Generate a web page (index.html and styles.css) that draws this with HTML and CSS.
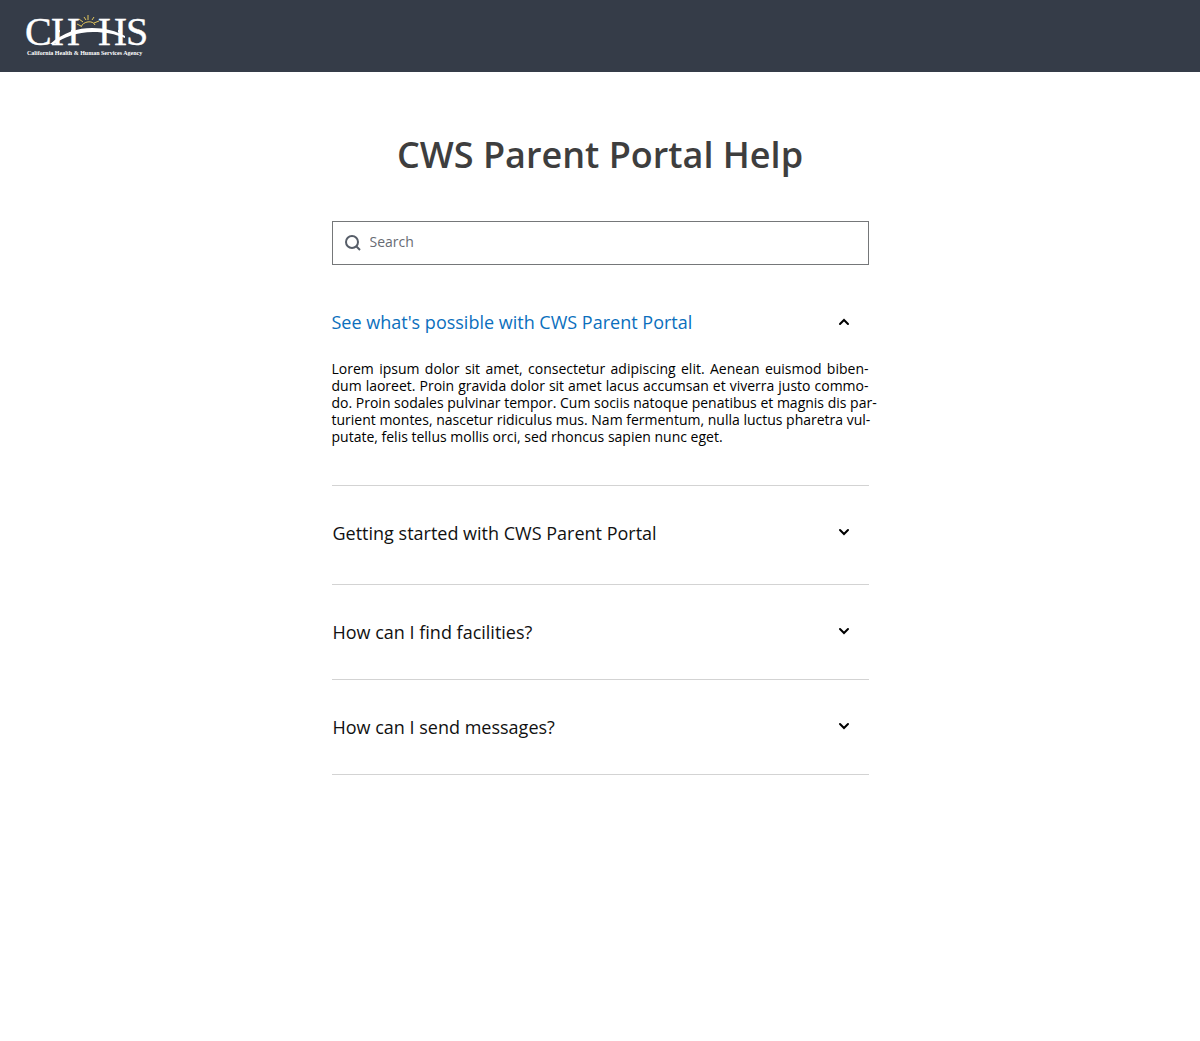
FILE: index.html
```html
<!DOCTYPE html>
<html lang="en">
<head>
<meta charset="utf-8">
<meta name="viewport" content="width=device-width, initial-scale=1">
<title>CWS Parent Portal Help</title>
<link rel="stylesheet" href="styles.css">
</head>
<body>
<header class="topbar">
  <svg class="logo" viewBox="0 0 124 44" role="img" aria-label="CHHS California Health and Human Services Agency">
    <g class="logo-letters">
      <text x="1" y="31">C</text>
      <text x="27" y="31">H</text>
      <text x="74" y="31">H</text>
      <text x="102" y="31">S</text>
    </g>
    <path class="logo-gap" d="M36 14H47V22H36ZM83 14H94V22H83Z"/>
    <path class="logo-bridge" d="M26 30C40 18 54 14 68 14C82 14 92 17 101 22V24C91 20 81 18 69 18C53 18 40 23 30 30Z"/>
    <path class="logo-sun" d="M57 13C59 7 69 6 71 11M53 10L57 12M55 5L59 8M60 3L62 6M64 1V6M70 3L68 6M75 7L70 9"/>
    <text class="logo-name" x="3" y="41">California Health &amp; Human Services Agency</text>
  </svg>
</header>
<main class="page">
  <h1 class="title">CWS Parent Portal Help</h1>
  <label class="search">
    <svg class="search-icon" viewBox="0 0 18 18" aria-hidden="true"><circle cx="8" cy="8" r="6"/><path d="M12 12L16 16"/></svg>
    <input class="search-input" type="search" placeholder="Search" aria-label="Search">
  </label>
  <section class="item item-open">
    <h2 class="item-heading"><button class="toggle" type="button" aria-expanded="true" aria-controls="possible">See what's possible with CWS Parent Portal
      <svg class="chevron" viewBox="0 0 12 12" aria-hidden="true"><path d="M2 8L6 4L10 8"/></svg></button></h2>
    <p class="answer" id="possible">Lorem ipsum dolor sit amet, consectetur adipiscing elit. Aenean euismod biben&shy;dum laoreet. Proin gravida dolor sit amet lacus accumsan et viverra justo commo&shy;<span class="keep">do. Proin sodales pulvinar tempor. Cum sociis natoque penatibus et magnis dis par</span>&shy;<span class="keep">turient montes, nascetur ridiculus mus. Nam fermentum, nulla luctus pharetra vul</span>&shy;putate, felis tellus mollis orci, sed rhoncus sapien nunc eget.</p>
  </section>
  <section class="item item-first">
    <h2 class="item-heading"><button class="toggle" type="button" aria-expanded="false">Getting started with CWS Parent Portal
      <svg class="chevron" viewBox="0 0 12 12" aria-hidden="true"><path d="M2 3L6 7L10 3"/></svg></button></h2>
  </section>
  <section class="item">
    <h2 class="item-heading"><button class="toggle" type="button" aria-expanded="false">How can I find facilities?
      <svg class="chevron" viewBox="0 0 12 12" aria-hidden="true"><path d="M2 3L6 7L10 3"/></svg></button></h2>
  </section>
  <section class="item">
    <h2 class="item-heading"><button class="toggle" type="button" aria-expanded="false">How can I send messages?
      <svg class="chevron" viewBox="0 0 12 12" aria-hidden="true"><path d="M2 3L6 7L10 3"/></svg></button></h2>
  </section>
</main>
</body>
</html>
```
FILE: styles.css
```css
* { box-sizing: border-box; }
body {
  margin: 0;
  background: #fff;
  color: #000;
  font-family: "Open Sans", sans-serif;
}
.topbar {
  display: flex;
  align-items: center;
  height: 72px;
  padding: 0 24px;
  background: #353c48;
}
.logo { width: 124px; height: 44px; overflow: visible; }
.logo-letters {
  fill: #fff;
  stroke: #fff;
  stroke-width: 0.4;
  font-family: "Liberation Serif", serif;
  font-size: 40px;
}
.logo-gap { fill: #353c48; }
.logo-bridge { fill: #fff; }
.logo-sun { fill: none; stroke: #e3c65c; stroke-width: 1; }
.logo-name {
  fill: #fff;
  font-family: "Liberation Serif", serif;
  font-size: 6px;
  font-weight: 700;
}
.page {
  width: 100%;
  max-width: 569px;
  margin: 0 auto;
  padding: 59px 16px 48px;
}
.title {
  margin: 0 0 42px;
  color: #3e3e3e;
  font-size: 36px;
  font-weight: 600;
  line-height: 48px;
  text-align: center;
}
.search {
  display: flex;
  align-items: center;
  gap: 8px;
  height: 44px;
  margin-bottom: 45px;
  padding: 0 11px;
  border: 1px solid #757779;
}
.search-icon {
  flex: none;
  width: 18px;
  height: 18px;
  fill: none;
  stroke: #565d68;
  stroke-width: 2;
}
.search-input {
  flex: 1;
  min-width: 0;
  padding: 0 0 2px;
  border: 0;
  outline: 0;
  background: none;
  font: 14px/20px "Open Sans", sans-serif;
}
.search-input::placeholder { color: #686b73; opacity: 1; }
.item {
  padding: 35px 0;
  border-bottom: 1px solid #d3d3d3;
}
.item-open { padding: 0 0 40px; }
.item-first { padding-bottom: 39px; }
.item-heading { margin: 0; }
.toggle {
  display: flex;
  align-items: center;
  justify-content: space-between;
  width: 100%;
  padding: 0 19px 0 1px;
  border: 0;
  background: none;
  color: #111;
  font: 18px/24px "Open Sans", sans-serif;
  text-align: left;
  cursor: pointer;
}
.item-open .toggle { padding-left: 0; color: #0b6fbd; }
.chevron {
  flex: none;
  width: 12px;
  height: 12px;
  fill: none;
  stroke: #000;
  stroke-width: 2;
  stroke-linecap: round;
}
.answer {
  margin: 26px 0 0;
  font-size: 14px;
  line-height: 17px;
  text-align: justify;
  hyphens: manual;
}
@media (min-width: 600px) {
  .keep { white-space: nowrap; }
}
```
